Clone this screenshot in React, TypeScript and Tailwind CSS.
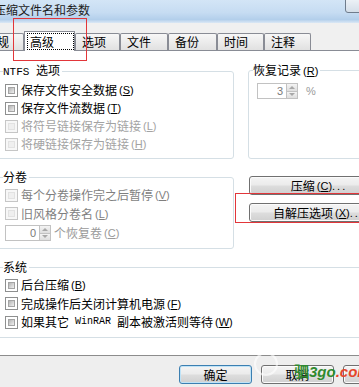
import type { ReactNode } from "react";

type State = "on" | "off" | "dim";

const textColor: Record<State, string> = {
  on: "text-black",
  off: "text-[#a3a3a3]",
  dim: "text-[#7f7f7f]",
};

function Box({ state }: { state: State }) {
  if (state !== "on") {
    return (
      <span className="flex h-[13px] w-[13px] shrink-0 border border-[#c6c6c6] bg-[#f7f7f7] p-[2px]">
        <span className="h-full w-full border border-[#e2e2e2] bg-[#efefef]" />
      </span>
    );
  }
  return (
    <span className="flex h-[13px] w-[13px] shrink-0 border border-[#8e8f8f] bg-white p-[2px]">
      <span className="h-full w-full border border-[#a4a4a4] bg-linear-to-br from-[#b4b4b4] to-[#f0f0f0]" />
    </span>
  );
}

function Hot({ k }: { k: string }) {
  return (
    <span className="ml-[2px] font-['Liberation_Sans',sans-serif] text-[11px]">
      (<span className="underline">{k}</span>)
    </span>
  );
}

function Check({
  children,
  hot,
  state = "on",
  h = "h-[18px]",
}: {
  children: ReactNode;
  hot: string;
  state?: State;
  h?: string;
}) {
  return (
    <div className={`flex items-center ${h}`}>
      <Box state={state} />
      <span className={`ml-[3px] flex items-center ${textColor[state]}`}>
        {children}
        <Hot k={hot} />
      </span>
    </div>
  );
}

function Spin({ value, w }: { value: string; w: string }) {
  return (
    <div className="flex h-[16px]">
      <div
        className={`flex items-center justify-end border border-[#c2c2c2] bg-white pr-[3px] font-['Liberation_Sans',sans-serif] text-[11px] text-[#7a7a7a] ${w}`}
      >
        {value}
      </div>
      <div className="flex w-[11px] flex-col">
        <div className="flex flex-1 items-center justify-center border border-l-0 border-[#c2c2c2] bg-linear-to-b from-[#f4f4f4] to-[#dedede]">
          <span className="h-0 w-0 border-x-[3px] border-b-[3px] border-x-transparent border-b-[#a8a8a8]" />
        </div>
        <div className="flex flex-1 items-center justify-center border border-l-0 border-t-0 border-[#c2c2c2] bg-linear-to-b from-[#f4f4f4] to-[#dedede]">
          <span className="h-0 w-0 border-x-[3px] border-t-[3px] border-x-transparent border-t-[#a8a8a8]" />
        </div>
      </div>
    </div>
  );
}

function Btn({ children, w, def }: { children: ReactNode; w: string; def?: boolean }) {
  return (
    <div
      className={`flex h-[19px] shrink-0 items-center justify-center rounded-[3px] border bg-[linear-gradient(180deg,#f4f4f4_0%,#ebebeb_48%,#dddddd_52%,#d0d0d0_100%)] ${
        def
          ? "border-[#3c7fb1] shadow-[inset_0_0_0_1px_#bfe3f7]"
          : "border-[#707070] shadow-[inset_0_0_0_1px_#fbfbfb]"
      } ${w}`}
    >
      {children}
    </div>
  );
}

const tabs = [
  { label: "常规", w: "w-[46px] -ml-[22px]" },
  { label: "高级", w: "w-[51px]", active: true },
  { label: "选项", w: "w-[45px]" },
  { label: "文件", w: "w-[48px]" },
  { label: "备份", w: "w-[49px]" },
  { label: "时间", w: "w-[47px]" },
  { label: "注释", w: "w-[47px]" },
];

export default function App() {
  return (
    <div className="relative h-[387px] w-[359px] overflow-hidden bg-white font-['Noto_Sans_CJK_SC',sans-serif] text-[12px] leading-[14px] text-black">
      {/* title bar */}
      <div className="flex h-[23px] items-start bg-[linear-gradient(180deg,#d3e5f6_0%,#c6dcf2_55%,#b3cfeb_85%,#dbe8f5_100%)]">
        <span className="-ml-[6px] mt-[3px] text-[#1c1c1c]">压缩文件名和参数</span>
        <span className="-mr-[10px] -mt-[5px] ml-auto h-[18px] w-[24px] rounded-[3px] border border-[#6f7c8c] bg-[linear-gradient(180deg,#f4f7fa,#d4dee9)]" />
      </div>

      {/* tabs */}
      <div className="flex h-[27px] items-end bg-[#f0f0f0]">
        {tabs.map((t) =>
          t.active ? (
            <div
              key={t.label}
              className={`relative z-10 -mb-px flex h-[20px] shrink-0 items-start border border-b-0 border-[#898c95] bg-white ${t.w}`}
            >
              <span className="ml-[2px] mt-px flex h-[17px] w-[47px] items-start border border-dotted border-black pl-[2px] pt-[1px]">
                {t.label}
              </span>
            </div>
          ) : (
            <div
              key={t.label}
              className={`flex h-[17px] shrink-0 items-start rounded-t-[2px] border border-b-0 border-[#898c95] bg-linear-to-b from-[#f7f7f7] to-[#e1e1e1] pl-[6px] pt-[1px] ${t.w}`}
            >
              {t.label}
            </div>
          )
        )}
      </div>

      {/* panel */}
      <div className="h-[305px] border-t border-[#898c95] bg-white pt-[12px]">
        <div className="flex">
          <fieldset className="-ml-[6px] w-[240px] shrink-0 rounded-[3px] border border-[#d5dfe5] pb-[5px] pl-[10px] pt-[2px]">
            <legend className="-ml-[2px] pr-[2px]">
              <span className="font-['Liberation_Mono',monospace] text-[11px]">NTFS </span>选项
            </legend>
            <Check hot="S">保存文件安全数据</Check>
            <Check hot="T">保存文件流数据</Check>
            <Check hot="L" state="off">
              将符号链接保存为链接
            </Check>
            <Check hot="H" state="off">
              将硬链接保存为链接
            </Check>
          </fieldset>
          <fieldset className="-mr-[12px] ml-[14px] flex-1 rounded-[3px] border border-[#d5dfe5] pl-[8px] pt-[5px]">
            <legend className="-ml-[4px] pr-[2px]">
              恢复记录
              <Hot k="R" />
            </legend>
            <div className="flex items-center">
              <Spin value="3" w="w-[30px]" />
              <span className="ml-[8px] font-['Liberation_Sans',sans-serif] text-[11px] text-[#9a9a9a]">%</span>
            </div>
          </fieldset>
        </div>

        <div className="mt-[11px] flex">
          <fieldset className="-ml-[6px] w-[240px] shrink-0 rounded-[3px] border border-[#d5dfe5] pb-[5px] pl-[10px] pt-[2px]">
            <legend className="-ml-[2px] pr-[2px]">分卷</legend>
            <Check hot="V" state="dim">
              每个分卷操作完之后暂停
            </Check>
            <Check hot="L" state="dim" h="h-[19px]">
              旧风格分卷名
            </Check>
            <div className="flex h-[20px] items-center">
              <Spin value="0" w="w-[35px]" />
              <span className="ml-[3px] flex items-center text-[#9a9a9a]">
                个恢复卷
                <Hot k="C" />
              </span>
            </div>
          </fieldset>
          <div className="ml-[15px] flex flex-col pt-[6px]">
            <Btn w="w-[140px]">
              压缩
              <Hot k="C" />
              <span className="font-['Liberation_Sans',sans-serif] text-[11px] tracking-[2px]">...</span>
            </Btn>
            <div className="mt-[8px]">
              <Btn w="w-[140px]">
                自解压选项
                <Hot k="X" />
                <span className="font-['Liberation_Sans',sans-serif] text-[11px] tracking-[2px]">...</span>
              </Btn>
            </div>
          </div>
        </div>

        <fieldset className="-mx-[6px] mt-[11px] rounded-[3px] border border-[#d5dfe5] pb-[6px] pl-[10px] pt-[2px]">
          <legend className="-ml-[2px] pr-[2px]">系统</legend>
          <Check hot="B">后台压缩</Check>
          <Check hot="F" h="h-[19px]">
            完成操作后关闭计算机电源
          </Check>
          <Check hot="W">
            如果其它
            <span className="mx-[6px] font-['Liberation_Mono',monospace] text-[10px]">WinRAR</span>
            副本被激活则等待
          </Check>
        </fieldset>
      </div>

      {/* footer */}
      <div className="flex h-[32px] items-start gap-[9px] border-t border-[#8c8c8c] bg-[#eeeeee] pl-[179px] pt-[9px]">
        <Btn w="w-[73px]" def>
          确定
        </Btn>
        <Btn w="w-[73px]">取消</Btn>
        <Btn w="w-[73px]">帮助</Btn>
      </div>

      {/* annotation + watermark overlays */}
      <div className="absolute left-[13px] top-[18px] h-[43px] w-[74px] border border-[#e2363a]" />
      <div className="absolute left-[235px] top-[193px] h-[30px] w-[140px] border border-[#e2363a]" />
      <div className="absolute left-[254px] top-[352px] h-[24px] w-[24px] rounded-full border-2 border-white/60" />
      <div className="absolute left-[294px] top-[363px] flex items-baseline font-['Liberation_Sans',sans-serif] text-[15px] font-bold italic leading-[16px]">
        <span className="font-['Noto_Sans_CJK_SC',sans-serif] not-italic text-[#2f8a2f]">驷</span>
        <span className="text-[#2f8a2f]">3go</span>
        <span className="text-[#e5462b]">.com</span>
      </div>
    </div>
  );
}
